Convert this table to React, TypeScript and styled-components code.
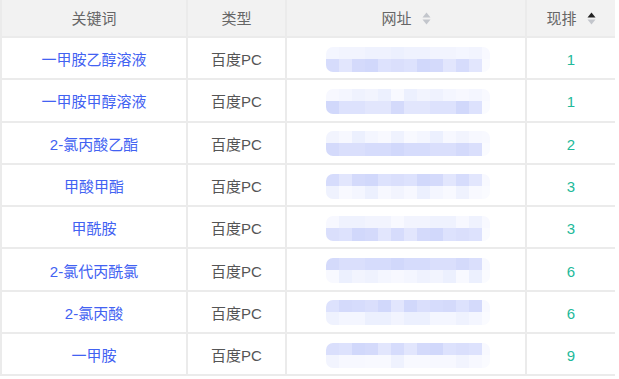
import React from "react";
import styled, { createGlobalStyle } from "styled-components";

const GlobalStyle = createGlobalStyle`
  html, body {
    margin: 0;
    padding: 0;
    background: #fff;
  }
  body {
    font-family: "Liberation Sans", "Noto Sans CJK SC", sans-serif;
  }
`;

type RowType = {
  keyword: string;
  kind: string;
  rank: number;
  pattern: "paleTop" | "darkTop";
};

const rows: RowType[] = [
  { keyword: "一甲胺乙醇溶液", kind: "百度PC", rank: 1, pattern: "paleTop" },
  { keyword: "一甲胺甲醇溶液", kind: "百度PC", rank: 1, pattern: "paleTop" },
  { keyword: "2-氯丙酸乙酯", kind: "百度PC", rank: 2, pattern: "paleTop" },
  { keyword: "甲酸甲酯", kind: "百度PC", rank: 3, pattern: "darkTop" },
  { keyword: "甲酰胺", kind: "百度PC", rank: 3, pattern: "paleTop" },
  { keyword: "2-氯代丙酰氯", kind: "百度PC", rank: 6, pattern: "darkTop" },
  { keyword: "2-氯丙酸", kind: "百度PC", rank: 6, pattern: "darkTop" },
  { keyword: "一甲胺", kind: "百度PC", rank: 9, pattern: "darkTop" },
];

const dark = ["#d6dcfc", "#dde2fd", "#d1d8fb", "#dadffc", "#e2e6fd", "#d4dafb"];
const pale = ["#f4f6ff", "#eff2fe", "#f7f8ff", "#ecf0fe", "#f2f4fe", "#f8f9ff"];

const shade = (list: string[], row: number, col: number) =>
  list[(row * 7 + col * 3 + ((col * col + row) % 5)) % list.length];

const Table = styled.div`
  width: 613px;
  display: grid;
  grid-template-columns: 186px 99px 240px 88px;
  grid-template-rows: 38px;
  grid-auto-rows: 42.3px;
  border-left: 2px solid #ebebeb;
  box-sizing: border-box;
`;

const Cell = styled.div<{ $head?: boolean; $last?: boolean }>`
  box-sizing: border-box;
  display: flex;
  align-items: center;
  justify-content: center;
  gap: 10px;
  padding-top: ${(p) => (p.$head ? "1px" : "4px")};
  border-bottom: 2px solid #ebebeb;
  border-right: ${(p) => (p.$last ? "none" : "2px solid #ebebeb")};
  background: ${(p) => (p.$head ? "#f2f2f2" : "#fff")};
  color: ${(p) => (p.$head ? "#666" : "#555")};
  font-size: 15px;
  line-height: 20px;
  white-space: nowrap;
`;

const Keyword = styled.span`
  color: #4262f2;
`;

const Rank = styled.span`
  color: #22b99a;
`;

const SortIcon = ({ active }: { active?: boolean }) => (
  <svg width="9" height="13" viewBox="0 0 9 13">
    <path d="M4.5 0.5 L8.5 5.5 L0.5 5.5 Z" fill={active ? "#222" : "#c3c6cc"} />
    <path d="M0.5 7.5 L8.5 7.5 L4.5 12.5 Z" fill="#c3c6cc" />
  </svg>
);

const UrlCell = styled(Cell)`
  justify-content: flex-start;
  padding-left: 39px;
  padding-top: 2px;
`;

const Mosaic = styled.div`
  display: grid;
  grid-template-columns: repeat(12, 13px) 8px;
  grid-template-rows: 12px 13px;
  filter: blur(0.7px);
  border-radius: 7px;
  overflow: hidden;
`;

const Tile = styled.div<{ $color: string }>`
  background: ${(p) => p.$color};
`;

const BlurredUrl = ({ row, pattern }: { row: number; pattern: RowType["pattern"] }) => {
  const top = pattern === "paleTop" ? pale : dark;
  const bottom = pattern === "paleTop" ? dark : pale;
  const cols = Array.from({ length: 13 }, (_, i) => i);
  return (
    <Mosaic>
      {cols.map((c) => (
        <Tile key={"t" + c} $color={c === 12 ? "#f8f9ff" : shade(top, row, c)} />
      ))}
      {cols.map((c) => (
        <Tile key={"b" + c} $color={c === 12 ? "#fafbff" : shade(bottom, row + 3, c)} />
      ))}
    </Mosaic>
  );
};

export default function App() {
  return (
    <>
      <GlobalStyle />
      <Table>
        <Cell $head>关键词</Cell>
        <Cell $head>类型</Cell>
        <Cell $head>
          网址 <SortIcon />
        </Cell>
        <Cell $head $last>
          现排 <SortIcon active />
        </Cell>
        {rows.map((r, i) => (
          <React.Fragment key={r.keyword}>
            <Cell>
              <Keyword>{r.keyword}</Keyword>
            </Cell>
            <Cell>{r.kind}</Cell>
            <UrlCell>
              <BlurredUrl row={i} pattern={r.pattern} />
            </UrlCell>
            <Cell $last>
              <Rank>{r.rank}</Rank>
            </Cell>
          </React.Fragment>
        ))}
      </Table>
    </>
  );
}
